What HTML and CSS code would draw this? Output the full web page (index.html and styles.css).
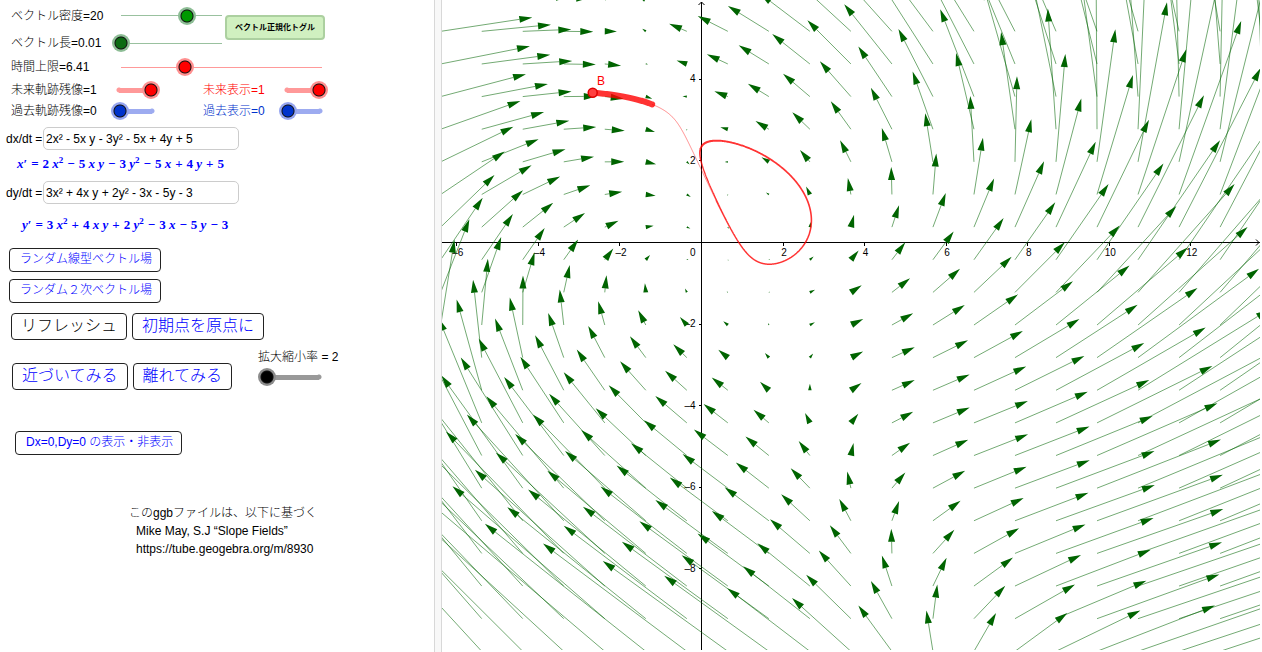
FILE: index.html
```
<!DOCTYPE html>
<html lang="ja">
<head>
<meta charset="utf-8">
<title>ベクトル場</title>
<link rel="stylesheet" href="styles.css">
</head>
<body>
<main class="app">
  <section class="panel">
    <div class="sliders">
      <label class="name" for="density">ベクトル密度=20</label>
      <input class="slider green" id="density" type="range" min="1" max="30" value="20">
      <button class="toggle">ベクトル正規化トグル</button>
      <label class="name" for="length">ベクトル長=0.01</label>
      <input class="slider green dark" id="length" type="range" min="0.01" max="1" step="0.01" value="0.01">
      <label class="name" for="limit">時間上限=6.41</label>
      <input class="slider red wide" id="limit" type="range" min="0" max="20" step="0.01" value="6.41">
    </div>
    <div class="switches">
      <label class="name" for="ft">未来軌跡残像=1</label>
      <input class="slider red thick" id="ft" type="range" min="0" max="1" value="1">
      <label class="name future" for="fs">未来表示=1</label>
      <input class="slider red thick" id="fs" type="range" min="0" max="1" value="1">
      <label class="name" for="pt">過去軌跡残像=0</label>
      <input class="slider blue thick" id="pt" type="range" min="0" max="1" value="0">
      <label class="name past" for="ps">過去表示=0</label>
      <input class="slider blue thick" id="ps" type="range" min="0" max="1" value="0">
    </div>

    <div class="equations">
      <div class="field"><label for="dx">dx/dt =</label><input id="dx" type="text" value="2x² - 5x y - 3y² - 5x + 4y + 5"></div>
      <p class="formula"><i>x</i>′<b>=</b>2 <i>x</i><sup>2</sup><b>−</b>5 <i>x</i> <i>y</i><b>−</b>3 <i>y</i><sup>2</sup><b>−</b>5 <i>x</i><b>+</b>4 <i>y</i><b>+</b>5</p>
      <div class="field"><label for="dy">dy/dt =</label><input id="dy" type="text" value="3x² + 4x y + 2y² - 3x - 5y - 3"></div>
      <p class="formula second"><i>y</i>′<b>=</b>3 <i>x</i><sup>2</sup><b>+</b>4 <i>x</i> <i>y</i><b>+</b>2 <i>y</i><sup>2</sup><b>−</b>3 <i>x</i><b>−</b>5 <i>y</i><b>−</b>3</p>
    </div>

    <div class="random">
      <button class="btn">ランダム線型ベクトル場</button>
      <button class="btn">ランダム２次ベクトル場</button>
    </div>
    <div class="actions">
      <button class="btn large black">リフレッシュ</button>
      <button class="btn large">初期点を原点に</button>
    </div>
    <div class="actions zooming">
      <button class="btn large">近づいてみる</button>
      <button class="btn large">離れてみる</button>
      <div class="ratio">
        <label for="ratio">拡大縮小率 = 2</label>
        <input class="slider ink thick" id="ratio" type="range" min="2" max="10" value="2">
      </div>
    </div>
    <button class="btn nullcline">Dx=0,Dy=0 の表示・非表示</button>

    <div class="credit">
      <p>このggbファイルは、以下に基づく</p>
      <p class="indent">Mike May, S.J “Slope Fields”</p>
      <p class="indent">https://tube.geogebra.org/m/8930</p>
    </div>
  </section>
  <div class="divider"></div>
  <section class="graph"><svg id="plot" class="plot" role="img" aria-label="ベクトル場のグラフ"></svg></section>
</main>
<script src="plot.js"></script>
</body>
</html>
```
FILE: styles.css
```
* { box-sizing: border-box; }
body {
  margin: 0;
  background: #fff;
  color: #000;
  font: 12px/18px "Liberation Sans", "Noto Sans CJK JP", sans-serif;
}
p { margin: 0; }
.app { display: flex; min-height: 100vh; }
.panel { flex: 0 0 434px; white-space: nowrap; }
.divider {
  flex: 0 0 8px;
  background: #f8f8f8;
  border: solid #d8d8d8;
  border-width: 0 1px;
}
.graph { flex: 1; min-width: 0; padding: 0 2px 2px 0; display: flex; }
.plot { flex: 1; width: 100%; min-width: 0; overflow: hidden; }

.sliders {
  display: grid;
  grid-template-columns: 101px 113px 100px;
  grid-template-rows: 31px 24px 24px;
  align-items: center;
  padding-left: 11px;
}
.sliders .name { grid-column: 1; }
.switches {
  display: grid;
  grid-template-columns: 100px 92px 76px 60px;
  grid-template-rows: 22px 20px;
  align-items: center;
  padding-left: 11px;
}
.name { font-weight: 300; }
.future { color: #f00; }
.past { color: #0033cc; }

.slider {
  --track: #99c19f;
  --thumb: #009900;
  --halo: #8dbd95;
  --line: 1px;
  appearance: none;
  width: 119px;
  height: 18px;
  margin: 0;
  background: none;
}
.slider::-webkit-slider-runnable-track {
  height: 18px;
  background: linear-gradient(var(--track), var(--track)) center / calc(100% - 18px) var(--line) no-repeat;
}
.slider::-webkit-slider-thumb {
  appearance: none;
  width: 18px;
  height: 18px;
  border-radius: 50%;
  background: radial-gradient(circle, var(--thumb) 5px, #111 6px, var(--halo) 7px);
}
.dark { --thumb: #0b6b12; }
.red { --track: #ff9999; --thumb: #ff0000; --halo: #ff9090; }
.blue { --track: #9dabf0; --thumb: #0033cc; --halo: #96a5f0; }
.ink { --track: #999; --thumb: #000; --halo: #8c8c8c; }
.wide { width: 219px; }
.thick { --line: 5px; width: 49px; }
.thick::-webkit-slider-runnable-track {
  background:
    radial-gradient(circle at 3px 50%, var(--track) 2px, transparent 3px) 5px 0 / 6px 100% no-repeat,
    radial-gradient(circle at 3px 50%, var(--track) 2px, transparent 3px) calc(100% - 5px) 0 / 6px 100% no-repeat,
    linear-gradient(var(--track), var(--track)) center / calc(100% - 16px) var(--line) no-repeat;
}

.toggle {
  grid-column: 3;
  grid-row: 1 / 3;
  height: 25px;
  padding: 0 0 1px;
  border: 2px solid #acd0a0;
  border-radius: 4px;
  background: #d0f0c0;
  color: #000;
  font: bold 8px/12px "Noto Sans CJK JP", sans-serif;
  white-space: nowrap;
}

.equations { padding: 6px 0 0 6px; }
.field { display: flex; align-items: center; }
.field label { width: 37px; }
.field input {
  width: 196px;
  height: 23px;
  padding: 0 2px;
  border: 1px solid #ccc;
  border-radius: 5px;
  background: #fff;
  color: #000;
  font: 12px/18px "Liberation Sans", sans-serif;
}
.formula {
  height: 31px;
  padding: 5px 0 0 11px;
  color: #0000ff;
  font: bold 13px/18px "Liberation Serif", serif;
}
.formula b { margin: 0 4px; }
.formula sup { font-size: 9px; line-height: 9px; }
.second { height: 44px; padding: 12px 0 0 16px; }

.random {
  display: flex;
  flex-direction: column;
  align-items: flex-start;
  gap: 7px;
  padding-left: 9px;
}
.btn {
  height: 24px;
  padding: 0 8px 3px 10px;
  border: 1px solid #222;
  border-radius: 4px;
  background: #fff;
  color: #0000ff;
  font: 300 12px/18px "Liberation Sans", "Noto Sans CJK JP", sans-serif;
  white-space: nowrap;
}
.large { height: 27px; padding: 0 9px 2px; font-size: 16px; line-height: 22px; }
.black { color: #000; }
.actions { display: flex; gap: 5px; padding: 10px 0 0 11px; }
.zooming { padding: 8px 0 0 12px; align-items: flex-end; }
.ratio { display: flex; flex-direction: column; padding-left: 21px; gap: 2px; }
.ratio label { line-height: 18px; font-weight: 300; }
.ratio .slider { width: 69px; margin-bottom: 4px; }
.nullcline { margin: 41px 0 0 15px; }
.credit { padding: 49px 0 0 129px; font-weight: 300; }
.indent { padding-left: 7px; }

.shaft { stroke: #006400; stroke-opacity: .55; stroke-width: 1; fill: none; }
.head { fill: #006400; }
.axis { stroke: #000; stroke-width: 1; fill: none; shape-rendering: crispEdges; }
.tip { stroke: #000; stroke-width: 1; fill: none; }
.tick {
  font: 10px "Liberation Sans", sans-serif;
  fill: #000;
  stroke: #fff;
  stroke-width: 2px;
  paint-order: stroke;
}
.orbit { stroke: #ff0000; stroke-opacity: .8; stroke-width: 1.2; fill: none; }
.orbit-faint { stroke-opacity: .45; stroke-width: 1; }
.orbit-thick { stroke-width: 6; stroke-linecap: round; }
.start { fill: #ff4040; stroke: #e00000; stroke-width: 1.5; }
.start-name { font: 12px "Liberation Sans", sans-serif; fill: #ff0000; }
```
FILE: plot.js
```
const svg = document.getElementById("plot");
const NS = "http://www.w3.org/2000/svg";
const UNIT = 40.77;
const OX = 259.5;
const OY = 242.5;
const STEP_X = 41.02;
const STEP_Y = 32.63;
const SCALE = 0.01;
const HEAD = 13;
const HALF_WIDTH = 0.27;

const f = (x, y) => 2 * x * x - 5 * x * y - 3 * y * y - 5 * x + 4 * y + 5;
const g = (x, y) => 3 * x * x + 4 * x * y + 2 * y * y - 3 * x - 5 * y - 3;

function add(name, attrs, text) {
  const el = document.createElementNS(NS, name);
  for (const key in attrs) el.setAttribute(key, attrs[key]);
  if (text !== undefined) el.textContent = text;
  svg.appendChild(el);
}

function drawField(width, height) {
  let heads = "";
  for (let px = -1.3; px < width + STEP_X; px += STEP_X) {
    for (let py = -1.3; py < height + STEP_Y; py += STEP_Y) {
      const x = (px - OX) / UNIT;
      const y = (OY - py) / UNIT;
      const vx = f(x, y) * SCALE * UNIT;
      const vy = -g(x, y) * SCALE * UNIT;
      const len = Math.hypot(vx, vy);
      if (len < 0.2) continue;
      const h = Math.min(HEAD, len);
      const ux = vx / len * h;
      const uy = vy / len * h;
      const tx = px + vx;
      const ty = py + vy;
      const bx = tx - ux;
      const by = ty - uy;
      const wx = uy * HALF_WIDTH;
      const wy = ux * HALF_WIDTH;
      add("path", { class: "shaft", d: `M${px} ${py}L${bx} ${by}` });
      heads += `M${tx} ${ty}L${bx - wx} ${by + wy}L${bx + wx} ${by - wy}Z`;
    }
  }
  add("path", { class: "head", d: heads });
}

function drawOrbit() {
  let x = (150.7 - OX) / UNIT;
  let y = (OY - 92.7) / UNIT;
  const dt = 0.001;
  const parts = [[], [], []];
  let phase = 0;
  for (let t = 0; t < 6.41; t += dt) {
    const px = OX + x * UNIT;
    const py = OY - y * UNIT;
    parts[phase].push(px.toFixed(2) + " " + py.toFixed(2));
    if ((phase === 0 && px > 210) || (phase === 1 && py > 200)) {
      phase += 1;
      parts[phase].push(px.toFixed(2) + " " + py.toFixed(2));
    }
    const k1 = f(x, y), l1 = g(x, y);
    const k2 = f(x + k1 * dt / 2, y + l1 * dt / 2), l2 = g(x + k1 * dt / 2, y + l1 * dt / 2);
    const k3 = f(x + k2 * dt / 2, y + l2 * dt / 2), l3 = g(x + k2 * dt / 2, y + l2 * dt / 2);
    const k4 = f(x + k3 * dt, y + l3 * dt), l4 = g(x + k3 * dt, y + l3 * dt);
    x += (k1 + 2 * k2 + 2 * k3 + k4) * dt / 6;
    y += (l1 + 2 * l2 + 2 * l3 + l4) * dt / 6;
    if (!(Math.abs(x) < 50 && Math.abs(y) < 50)) break;
  }
  ["orbit orbit-thick", "orbit orbit-faint", "orbit"].forEach((name, i) => {
    if (parts[i].length > 1) add("path", { class: name, d: "M" + parts[i].join("L") });
  });
  add("circle", { class: "start", cx: 150.7, cy: 92.7, r: 4.5 });
  add("text", { class: "start-name", x: 155, y: 85 }, "B");
}

function drawAxes(width, height) {
  add("path", { class: "axis", d: `M0 ${OY}H${width}M${OX} 2V${height}` });
  add("path", { class: "tip", d: `M${OX - 3} 5L${OX} 2L${OX + 3} 5M${width - 4} ${OY - 3}L${width - 1} ${OY}L${width - 4} ${OY + 3}` });
  const label = n => (n < 0 ? "–" : "") + Math.abs(n);
  for (let n = -6; OX + n * UNIT < width - 10; n += 2) {
    if (n === 0) continue;
    const x = OX + n * UNIT;
    add("path", { class: "axis", d: `M${x} ${OY}v3` });
    add("text", { class: "tick", x: x + 1, y: 256, "text-anchor": "middle" }, label(n));
  }
  for (let n = 4; OY - n * UNIT < height - 10; n -= 2) {
    if (n === 0) continue;
    const y = OY - n * UNIT;
    add("path", { class: "axis", d: `M${OX} ${y}h-3` });
    add("text", { class: "tick", x: OX - 6, y: y + 3, "text-anchor": "end" }, label(n));
  }
  add("text", { class: "tick", x: OX - 6, y: 256, "text-anchor": "end" }, "0");
}

function draw() {
  svg.replaceChildren();
  const { width, height } = svg.getBoundingClientRect();
  drawAxes(width, height);
  drawField(width, height);
  drawOrbit();
}

draw();
window.addEventListener("resize", draw);
```
